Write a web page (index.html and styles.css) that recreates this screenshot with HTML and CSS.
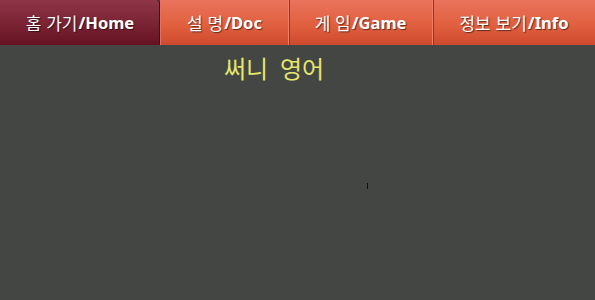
FILE: index.html
```html
<!DOCTYPE html>
<html lang="ko">
<head>
<meta charset="utf-8">
<link rel="stylesheet" href="styles.css">
</head>
<body>
<nav class="tabs">
  <div class="tab active"><span class="ko">홈 가기</span>/Home</div>
  <div class="tab"><span class="ko">설 명</span>/Doc</div>
  <div class="tab"><span class="ko">게 임</span>/Game</div>
  <div class="tab"><span class="ko">정보 보기</span>/Info</div>
</nav>
<main class="content">
  <h1 class="title">써니 영어</h1>
  <div class="cursor"></div>
</main>
</body>
</html>
```
FILE: styles.css
```css
html, body {
  margin: 0;
  padding: 0;
  width: 595px;
  height: 300px;
  overflow: hidden;
  background: #444644;
  font-family: "Noto Sans", "Noto Sans CJK KR", sans-serif;
}
.tabs {
  display: grid;
  grid-template-columns: 160px 128px 144px 163px;
  height: 45px;
}
.tab {
  display: flex;
  align-items: center;
  justify-content: center;
  color: #fff;
  font-weight: bold;
  font-size: 16.5px;
  text-shadow: 1px 1px 1px rgba(0,0,0,0.55);
  background: linear-gradient(#ea735c, #e0603f 55%, #cf4a2f);
  border-left: 1px solid #f08060;
  box-shadow: inset 1px 0 0 #9e3020;
  padding-bottom: 1px;
}
.tab:first-child {
  border-left: none;
  box-shadow: none;
}
.tab.active {
  background: linear-gradient(#8e3648, #7b2434 50%, #661222);
  border-top-right-radius: 3px;
  box-shadow: inset -1px 0 0 #4f0a16;
}
.tab.active + .tab {
  border-left: 1px solid #e8705a;
  box-shadow: none;
}
.ko {
  font-family: "Noto Sans CJK KR", sans-serif;
  font-weight: normal;
  font-size: 17px;
  margin-right: 1px;
}
.content {
  display: flex;
  flex-direction: column;
  align-items: flex-start;
  padding-left: 224px;
}
.title {
  margin: 8px 0 0 0;
  color: #e6e66a;
  font-family: "Noto Sans CJK KR", sans-serif;
  font-weight: normal;
  font-size: 24px;
  word-spacing: 5px;
  line-height: 30px;
}
.cursor {
  margin: 100px 0 0 143px;
  width: 1px;
  height: 6px;
  background: #111;
}
```
